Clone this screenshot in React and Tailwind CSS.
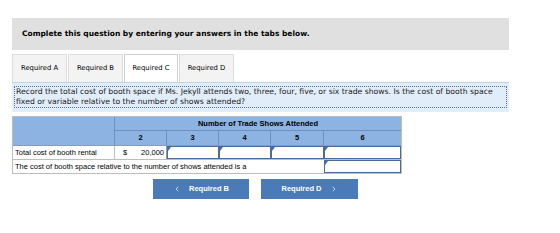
import React from 'react';
import { ChevronLeft, ChevronRight } from 'lucide-react';

const tabs = ['Required A', 'Required B', 'Required C', 'Required D'];

function Cell() {
  return (
    <div className="relative h-full w-full bg-white border border-[#4a6c9b]">
      <span className="absolute left-0 top-0 w-0 h-0 border-t-[4px] border-r-[3px] border-t-[#2f6fd0] border-r-transparent" />
    </div>
  );
}

export default function App() {
  return (
    <div className="w-[560px] h-[233px] bg-white font-['DejaVu_Sans',sans-serif] text-black">
      <div className="pt-[18px] pl-[12px] w-[509px]">
        <div className="h-[32px] bg-[#e0e0e0] flex items-center pl-[10px] text-[7.5px] font-bold">
          Complete this question by entering your answers in the tabs below.
        </div>

        <div className="mt-[4px] flex gap-[1px] h-[28px]">
          {tabs.map((t, i) => (
            <div
              key={t}
              className={
                i === 2
                  ? 'w-[54px] flex items-center justify-center text-[6.8px] bg-white border border-b-0 border-[#cfcfcf]'
                  : 'w-[55px] flex items-center justify-center text-[6.8px] bg-[#f3f3f3] border border-b-0 border-[#dedede]'
              }
            >
              {t}
            </div>
          ))}
        </div>

        <div className="h-[30px] bg-[#e1edf9] border-t border-[#c5d3e0] px-[2px] pt-[3px]">
          <div className="border border-dotted border-[#4d6f99] px-[1px] text-[7.7px] leading-[10px] text-[#1a1a1a]">
            Record the total cost of booth space if Ms. Jekyll attends two, three, four, five, or six trade shows. Is the cost of booth space fixed or variable relative to the number of shows attended?
          </div>
        </div>

        <div className="mt-[4px] w-[390px] border border-[#bdbdbd] font-['Liberation_Sans',sans-serif] text-[7.5px]">
          <div className="flex h-[28px] bg-[#8db3e2]">
            <div className="w-[102px] border-r border-[#6f8fbf]" />
            <div className="flex-1 flex flex-col">
              <div className="h-[14px] flex items-center justify-center font-bold border-b border-[#6f8fbf]">
                Number of Trade Shows Attended
              </div>
              <div className="h-[14px] flex font-bold">
                <div className="w-[52px] flex items-center justify-center border-r border-[#6f8fbf]">2</div>
                <div className="w-[52px] flex items-center justify-center border-r border-[#6f8fbf]">3</div>
                <div className="w-[52px] flex items-center justify-center border-r border-[#6f8fbf]">4</div>
                <div className="w-[53px] flex items-center justify-center border-r border-[#6f8fbf]">5</div>
                <div className="flex-1 flex items-center justify-center">6</div>
              </div>
            </div>
          </div>
          <div className="flex h-[14px] border-t border-[#8a9bb3]">
            <div className="w-[102px] flex items-center pl-[2px] border-r border-[#bdbdbd]">Total cost of booth rental</div>
            <div className="w-[52px] flex items-center justify-between px-[2px] border-r border-[#8a9bb3]">
              <span className="pl-[6px]">$</span>
              <span>20,000</span>
            </div>
            <div className="w-[52px]"><Cell /></div>
            <div className="w-[52px]"><Cell /></div>
            <div className="w-[53px]"><Cell /></div>
            <div className="flex-1"><Cell /></div>
          </div>
          <div className="flex h-[14px] border-t border-[#bdbdbd]">
            <div className="w-[311px] flex items-center pl-[2px]">
              The cost of booth space relative to the number of shows attended is a
            </div>
            <div className="flex-1"><Cell /></div>
          </div>
        </div>

        <div className="mt-[5px] flex gap-[12px] pl-[141px] font-['Liberation_Sans',sans-serif] text-[7.5px] font-bold text-white">
          <div className="w-[96px] h-[20px] bg-[#4a7ab8] flex items-center justify-center gap-[8px]">
            <ChevronLeft size={8} strokeWidth={2} />
            <span>Required B</span>
          </div>
          <div className="w-[97px] h-[20px] bg-[#4a7ab8] flex items-center justify-center gap-[8px]">
            <span>Required D</span>
            <ChevronRight size={8} strokeWidth={2} />
          </div>
        </div>
      </div>
    </div>
  );
}
